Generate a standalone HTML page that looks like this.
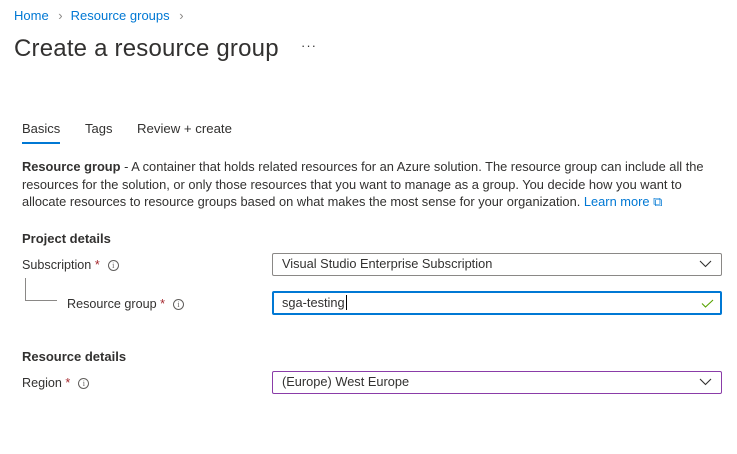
<!DOCTYPE html>
<html><head><style>
*{margin:0;padding:0;box-sizing:border-box}
body{width:737px;height:454px;background:#fff;font-family:"Liberation Sans",sans-serif;color:#323130;position:relative;overflow:hidden;font-size:12.6px}
.a{position:absolute;white-space:nowrap}
.blue{color:#0078d4}
.req{color:#a4262c}
.info{display:inline-block;width:11px;height:11px;border:1px solid #605e5c;border-radius:50%;font-size:8px;line-height:9px;text-align:center;color:#605e5c;vertical-align:1px;margin-left:8px;font-family:"Liberation Serif",serif}
.box{position:absolute;border:1px solid #8a8886;border-radius:2px;padding-left:9px;line-height:20px;font-size:12.8px}
h2{font-size:13px;font-weight:bold}
</style></head><body>
<div class="a blue" style="left:14px;top:8px;font-size:13px">Home <span style="color:#8a8886;margin:0 8px 0 6px">&#x203A;</span>Resource groups <span style="color:#8a8886;margin-left:6px">&#x203A;</span></div>
<div class="a" style="left:14px;top:35px;font-size:24px;letter-spacing:0.2px;color:#323130">Create a resource group</div>
<div class="a" style="left:301px;top:38px;font-size:13px;letter-spacing:1px">···</div>
<div class="a" style="left:22px;top:121px;font-size:13px">Basics</div>
<div style="position:absolute;left:22px;top:142px;width:38px;height:2px;background:#0078d4"></div>
<div class="a" style="left:85px;top:121px;font-size:13px">Tags</div>
<div class="a" style="left:137px;top:121px;font-size:13.2px">Review + create</div>
<div class="a" style="left:22px;top:158px;line-height:17.5px;font-size:12.85px"><b>Resource group</b> - A container that holds related resources for an Azure solution. The resource group can include all the<br>resources for the solution, or only those resources that you want to manage as a group. You decide how you want to<br>allocate resources to resource groups based on what makes the most sense for your organization. <span class="blue">Learn more &#x29C9;</span></div>
<h2 class="a" style="left:22px;top:231px">Project details</h2>
<div class="a" style="left:22px;top:258px">Subscription <span class="req">*</span><span class="info">i</span></div>
<div style="position:absolute;left:25px;top:278px;width:32px;height:23px;border-left:1px solid #8a8886;border-bottom:1px solid #8a8886"></div>
<div class="a" style="left:67px;top:297px">Resource group <span class="req">*</span><span class="info">i</span></div>
<div class="box" style="left:272px;top:253px;width:450px;height:23px">Visual Studio Enterprise Subscription
<svg style="position:absolute;right:9px;top:6px" width="13" height="8" viewBox="0 0 13 8"><path d="M1 1l5.5 5.5L12 1" fill="none" stroke="#323130" stroke-width="1.1"/></svg></div>
<div class="box" style="left:272px;top:291px;width:450px;height:24px;border:2px solid #0078d4;padding-left:8px">sga-testing<span style="border-left:1px solid #000;margin-left:1px"></span>
<svg style="position:absolute;right:6px;top:6px" width="13" height="9" viewBox="0 0 13 9"><path d="M1 4.5l3.5 3.5L12 1" fill="none" stroke="#57a300" stroke-width="1.1"/></svg></div>
<h2 class="a" style="left:22px;top:349px">Resource details</h2>
<div class="a" style="left:22px;top:376px">Region <span class="req">*</span><span class="info">i</span></div>
<div class="box" style="left:272px;top:371px;width:450px;height:23px;border-color:#8a3ca8">(Europe) West Europe
<svg style="position:absolute;right:9px;top:6px" width="13" height="8" viewBox="0 0 13 8"><path d="M1 1l5.5 5.5L12 1" fill="none" stroke="#323130" stroke-width="1.1"/></svg></div>
</body></html>
